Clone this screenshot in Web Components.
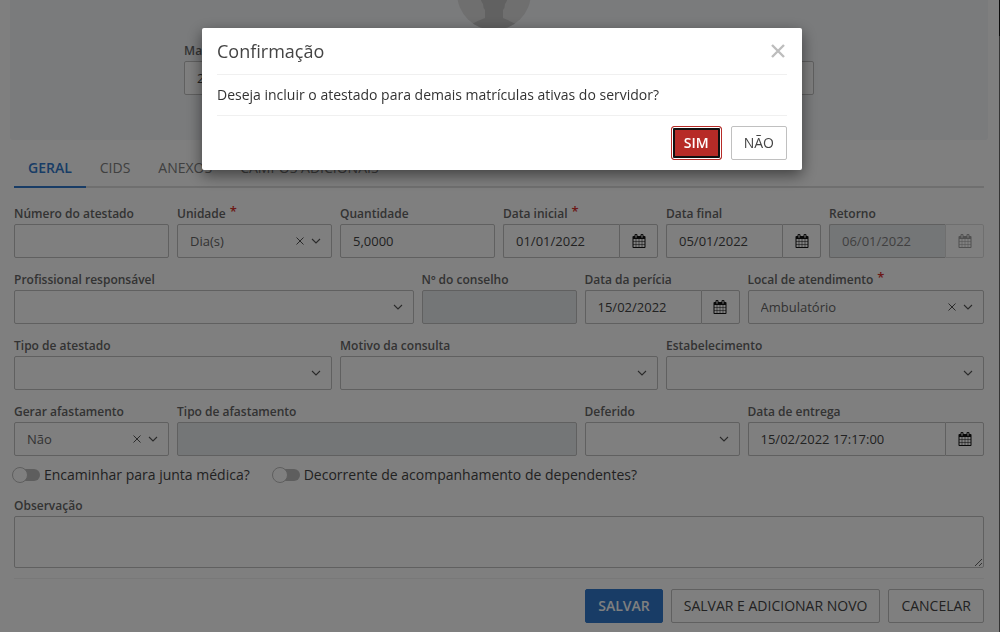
<!DOCTYPE html>
<html lang="pt-BR">
<head>
<meta charset="utf-8">
<meta name="viewport" content="width=device-width, initial-scale=1">
<title>Atestado</title>
<style>
  html { background: #fff; }
  body { margin: 0; font: 14px/20px "Open Sans", "Noto Sans", sans-serif; color: #444; }
</style>
</head>
<body>
<app-shell>
  <employee-panel></employee-panel>
  <app-main>
    <tab-bar items="GERAL,CIDS,ANEXOS,CAMPOS ADICIONAIS"></tab-bar>
    <field-grid>
      <form-field span="2" label="Número do atestado"></form-field>
      <form-field span="2" label="Unidade" kind="select" value="Dia(s)" required></form-field>
      <form-field span="2" label="Quantidade" value="5,0000"></form-field>
      <form-field span="2" label="Data inicial" kind="date" value="01/01/2022" required></form-field>
      <form-field span="2" label="Data final" kind="date" value="05/01/2022"></form-field>
      <form-field span="2" label="Retorno" kind="date" value="06/01/2022" disabled></form-field>

      <form-field span="5" label="Profissional responsável" kind="select"></form-field>
      <form-field span="2" label="Nº do conselho" disabled></form-field>
      <form-field span="2" label="Data da perícia" kind="date" value="15/02/2022"></form-field>
      <form-field span="3" label="Local de atendimento" kind="select" value="Ambulatório" required></form-field>

      <form-field span="4" label="Tipo de atestado" kind="select"></form-field>
      <form-field span="4" label="Motivo da consulta" kind="select"></form-field>
      <form-field span="4" label="Estabelecimento" kind="select"></form-field>

      <form-field span="2" label="Gerar afastamento" kind="select" value="Não"></form-field>
      <form-field span="5" label="Tipo de afastamento" disabled></form-field>
      <form-field span="2" label="Deferido" kind="select"></form-field>
      <form-field span="3" label="Data de entrega" kind="date" value="15/02/2022 17:17:00"></form-field>
    </field-grid>
    <toggle-row>
      <toggle-switch label="Encaminhar para junta médica?"></toggle-switch>
      <toggle-switch label="Decorrente de acompanhamento de dependentes?"></toggle-switch>
    </toggle-row>
    <form-field label="Observação" kind="textarea"></form-field>
    <action-bar>
      <app-button variant="primary">SALVAR</app-button>
      <app-button>SALVAR E ADICIONAR NOVO</app-button>
      <app-button>CANCELAR</app-button>
    </action-bar>
  </app-main>
</app-shell>

<confirm-dialog heading="Confirmação">
  Deseja incluir o atestado para demais matrículas ativas do servidor?
  <app-button slot="actions" variant="danger">SIM</app-button>
  <app-button slot="actions">NÃO</app-button>
</confirm-dialog>

<script>
const define = (name, render) => customElements.define(name, class extends HTMLElement {
  connectedCallback() {
    if (this.shadowRoot) return;
    this.attachShadow({ mode: 'open' }).innerHTML = render(this);
  }
});

const calendarIcon = `<svg width="14" height="14" viewBox="0 0 1792 1792" fill="currentColor" aria-hidden="true"><path d="M192 1664h288v-288h-288v288zm352 0h320v-288h-320v288zm-352-352h288v-320h-288v320zm352 0h320v-320h-320v320zm-352-384h288v-288h-288v288zm736 736h320v-288h-320v288zm-384-736h320v-288h-320v288zm768 736h288v-288h-288v288zm-384-352h320v-320h-320v320zm-352-864v-288q0-13-9.500-22.500t-22.500-9.500h-64q-13 0-22.500 9.500t-9.500 22.500v288q0 13 9.500 22.500t22.500 9.500h64q13 0 22.500-9.500t9.500-22.500zm736 864h288v-320h-288v320zm-384-384h320v-288h-320v288zm384 0h288v-288h-288v288zm32-480v-288q0-13-9.500-22.500t-22.500-9.500h-64q-13 0-22.500 9.500t-9.500 22.500v288q0 13 9.500 22.500t22.500 9.500h64q13 0 22.500-9.500t9.500-22.500zm384-64v1280q0 52-38 90t-90 38h-1408q-52 0-90-38t-38-90v-1280q0-52 38-90t90-38h128v-96q0-66 47-113t113-47h64q66 0 113 47t47 113v96h384v-96q0-66 47-113t113-47h64q66 0 113 47t47 113v96h128q52 0 90 38t38 90z"/></svg>`;
const chevronIcon = `<svg width="10" height="6" viewBox="0 0 10 6" fill="none" stroke="currentColor" stroke-width="1.1" aria-hidden="true"><path d="M1 1l4 4 4-4"/></svg>`;
const clearIcon = `<svg width="8" height="8" viewBox="0 0 8 8" fill="none" stroke="currentColor" stroke-width="1" aria-hidden="true"><path d="M.5.5l7 7M7.500.5l-7 7"/></svg>`;

define('app-shell', () => `
  <style>
    :host { display: block; padding-right: 1px; background: linear-gradient(#181818 36px, #686868 36px) right top / 1px 100% no-repeat; }
  </style><slot></slot>`);

define('app-main', () => `
  <style>
    :host { display: block; padding: 0 15px 9px 14px; }
  </style><slot></slot>`);

define('employee-panel', () => `
  <style>
    :host { display: block; margin: 0 11px 0 10px; padding-bottom: 45px; background: #f4f6f9; border-radius: 0 0 3px 3px; }
    .inner { display: flex; flex-direction: column; width: 64.4%; margin: 0 auto; }
    .avatar { display: block; align-self: center; margin: 0 10px 11px 0; }
  </style>
  <div class="inner">
    <svg class="avatar" width="74" height="30" viewBox="0 44 74 30" role="img" aria-label="Foto">
      <defs><clipPath id="c"><circle cx="37" cy="37" r="37"/></clipPath></defs>
      <circle cx="37" cy="37" r="37" fill="#dedede"/>
      <path clip-path="url(#c)" fill="#c3c3c3" d="M23 40q1 6 3 8 0 4 2 6v8q-8 3-13 6v8h44v-8q-6-3-13-6v-8q2-2 2-6 2-2 3-8z"/>
    </svg>
    <form-field label="Ma" value="2"></form-field>
  </div>`);

define('tab-bar', el => `
  <style>
    :host { display: flex; margin-bottom: 16px; box-shadow: inset 0 -2px #dfdfdf; }
    button { font: inherit; color: #808080; background: none; border: 0; border-bottom: 2px solid transparent; padding: 18px 14px 8px; margin: 0; line-height: 20px; }
    button[aria-selected=true] { color: #3079cc; font-weight: 600; border-color: #3079cc; }
  </style>` + el.getAttribute('items').split(',').map((t, i) =>
    `<button type="button" role="tab" aria-selected="${i === 0}">${t}</button>`).join(''));

define('field-grid', () => `
  <style>
    :host { display: grid; grid-template-columns: repeat(12, minmax(0, 1fr)); gap: 12px 8px; }
  </style><slot></slot>`);

define('form-field', el => {
  const a = n => el.getAttribute(n) || '';
  const dis = el.hasAttribute('disabled') ? 'disabled' : '';
  const kind = a('kind') || 'text', value = a('value');
  let control;
  if (kind === 'select') {
    control = `<div class="box"><select id="f"><option>${value}</option></select><span class="icons">${
      value ? `<button class="clear" type="button" aria-label="Limpar">${clearIcon}</button>` : ''}${chevronIcon}</span></div>`;
  } else if (kind === 'date') {
    control = `<div class="group"><input id="f" type="text" value="${value}" ${dis}><button class="pick" type="button" aria-label="Abrir calendário" ${dis}>${calendarIcon}</button></div>`;
  } else if (kind === 'textarea') {
    control = `<textarea id="f"></textarea>`;
  } else {
    control = `<input id="f" type="text" value="${value}" ${dis}>`;
  }
  return `
  <style>
    * { box-sizing: border-box; }
    :host { display: block; min-width: 0; grid-column: span ${a('span') || 12}; }
    label { display: flex; gap: 4px; height: 20px; font-size: 12px; font-weight: 600; line-height: 20px; color: #666; white-space: nowrap; }
    .req { color: #d9302c; font-size: 13px; line-height: 14px; }
    input, select, textarea { display: block; width: 100%; height: 34px; margin: 0; padding: 0 12px; font: inherit; font-size: 13px; color: #444; background: #fff; border: 1px solid #c0c0c0; border-radius: 2px; outline: 0; }
    select { appearance: none; color: #666; grid-area: 1 / 1; }
    input:disabled { background: #e9ecef; color: #808080; }
    textarea { height: 52px; padding: 6px 12px; resize: vertical; }
    .box { display: grid; align-items: center; }
    .icons { grid-area: 1 / 1; justify-self: end; display: flex; align-items: center; gap: 7px; margin-right: 11px; color: #555; pointer-events: none; }
    .clear { display: flex; padding: 0; border: 0; background: none; color: inherit; }
    .group { display: flex; }
    .group input { flex: 1; min-width: 0; border-radius: 2px 0 0 2px; border-right: 0; }
    .pick { flex: none; width: 39px; height: 34px; padding: 0; display: flex; align-items: center; justify-content: center; color: #111; background: #fff; border: 1px solid #c0c0c0; border-radius: 0 2px 2px 0; }
    .pick:disabled { opacity: .5; color: #444; }
  </style>
  <label for="f"><span>${a('label')}</span>${el.hasAttribute('required') ? '<span class="req">*</span>' : ''}</label>${control}`;
});

define('toggle-row', () => `
  <style>
    :host { display: flex; gap: 22px; margin: 8px 0 10px -2px; }
  </style><slot></slot>`);

define('toggle-switch', el => `
  <style>
    :host { display: block; }
    label { display: flex; align-items: center; gap: 4px; line-height: 22px; color: #444; }
    input { appearance: none; display: grid; align-items: center; width: 28px; height: 16px; margin: 0; }
    input::before, input::after { content: ""; grid-area: 1 / 1; box-sizing: border-box; }
    input::before { height: 12px; margin-left: 4px; border-radius: 6px; background: #bdbdbd; }
    input::after { width: 16px; height: 16px; border: 1px solid #bdbdbd; border-radius: 50%; background: #fff; }
  </style>
  <label><input type="checkbox" role="switch"><span>${el.getAttribute('label')}</span></label>`);

define('action-bar', () => `
  <style>
    :host { display: flex; justify-content: flex-end; gap: 8px; margin-top: 10px; padding-top: 10px; border-top: 1px solid #f0f0f0; }
  </style><slot></slot>`);

define('app-button', () => `
  <style>
    :host { display: block; }
    button { display: block; height: 34px; margin: 0; padding: 0 12px; font: inherit; color: #444; background: #fff; border: 1px solid #c0c0c0; border-radius: 2px; white-space: nowrap; }
    :host([variant=primary]) button { color: #fff; background: #3079cc; border-color: #3079cc; font-weight: 600; }
    :host([variant=danger]) button { color: #fff; background: #b72b27; border-color: #b72b27; border-radius: 3px; font-weight: 600; box-shadow: inset 0 0 0 1px #fff, inset 0 0 0 3px #101010; }
  </style>
  <button type="button"><slot></slot></button>`);

define('confirm-dialog', el => `
  <style>
    * { box-sizing: border-box; }
    :host { position: fixed; inset: 0; display: flex; justify-content: center; align-items: flex-start; padding: 28px 0 0 4px; background: rgba(0, 0, 0, .5); }
    section { width: 600px; max-width: 100%; padding: 0 15px; background: #fff; border-radius: 2px; box-shadow: 0 5px 15px rgba(0, 0, 0, .5); }
    header { display: flex; align-items: center; justify-content: space-between; height: 47px; border-bottom: 1px solid #f0f0f0; }
    h2 { margin: 0; font-size: 18px; line-height: 24px; font-weight: 400; color: #444; }
    header button { display: flex; padding: 0 2px; border: 0; background: none; color: #bdbdbd; }
    .body { padding: 10px 0; border-bottom: 1px solid #f0f0f0; color: #333; }
    footer { display: flex; justify-content: flex-end; gap: 9px; padding: 10px 0; }
  </style>
  <section role="dialog" aria-modal="true" aria-labelledby="t">
    <header><h2 id="t">${el.getAttribute('heading')}</h2>
      <button type="button" aria-label="Fechar"><svg width="14" height="14" viewBox="0 0 14 14" fill="none" stroke="currentColor" stroke-width="2.400"><path d="M1 1l12 12M13 1L1 13"/></svg></button>
    </header>
    <div class="body"><slot></slot></div>
    <footer><slot name="actions"></slot></footer>
  </section>`);
</script>
</body>
</html>
